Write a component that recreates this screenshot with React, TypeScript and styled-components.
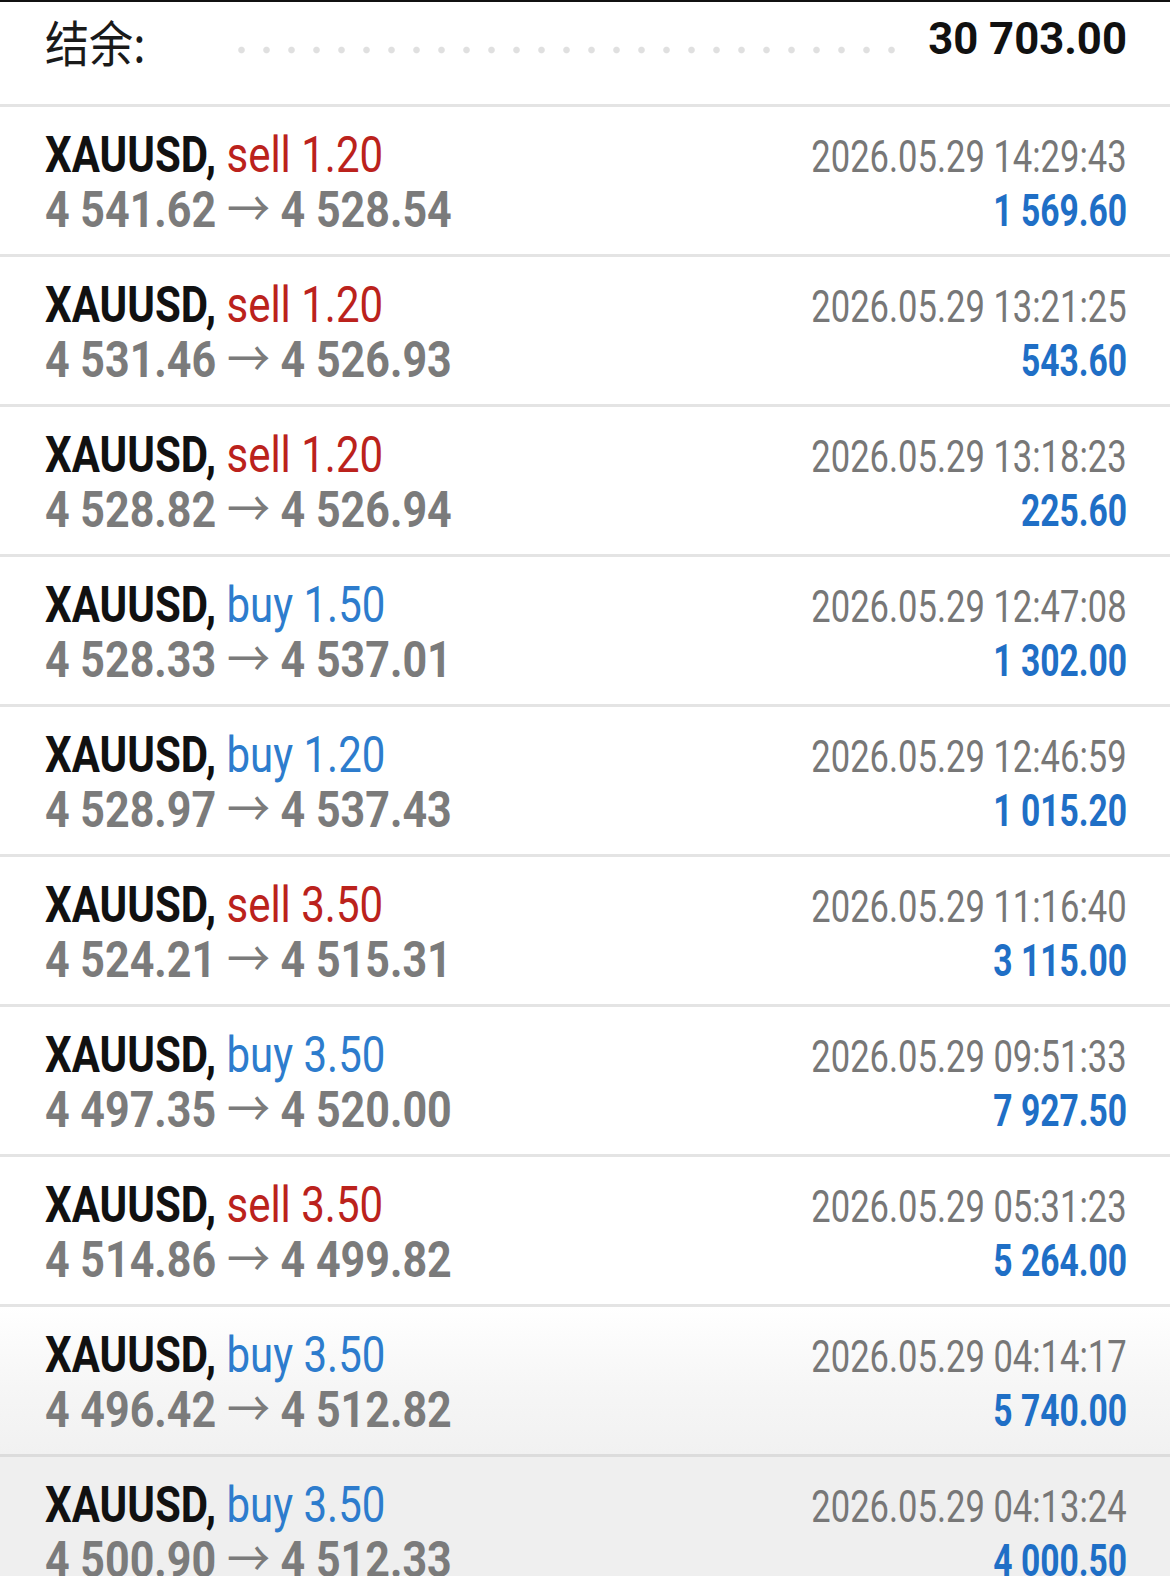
import React from "react";
import styled, { createGlobalStyle } from "styled-components";

interface Trade {
  side: "sell" | "buy";
  volume: string;
  open: string;
  close: string;
  time: string;
  profit: string;
}

const trades: Trade[] = [
  { side: "sell", volume: "1.20", open: "4 541.62", close: "4 528.54", time: "2026.05.29 14:29:43", profit: "1 569.60" },
  { side: "sell", volume: "1.20", open: "4 531.46", close: "4 526.93", time: "2026.05.29 13:21:25", profit: "543.60" },
  { side: "sell", volume: "1.20", open: "4 528.82", close: "4 526.94", time: "2026.05.29 13:18:23", profit: "225.60" },
  { side: "buy", volume: "1.50", open: "4 528.33", close: "4 537.01", time: "2026.05.29 12:47:08", profit: "1 302.00" },
  { side: "buy", volume: "1.20", open: "4 528.97", close: "4 537.43", time: "2026.05.29 12:46:59", profit: "1 015.20" },
  { side: "sell", volume: "3.50", open: "4 524.21", close: "4 515.31", time: "2026.05.29 11:16:40", profit: "3 115.00" },
  { side: "buy", volume: "3.50", open: "4 497.35", close: "4 520.00", time: "2026.05.29 09:51:33", profit: "7 927.50" },
  { side: "sell", volume: "3.50", open: "4 514.86", close: "4 499.82", time: "2026.05.29 05:31:23", profit: "5 264.00" },
  { side: "buy", volume: "3.50", open: "4 496.42", close: "4 512.82", time: "2026.05.29 04:14:17", profit: "5 740.00" },
  { side: "buy", volume: "3.50", open: "4 500.90", close: "4 512.33", time: "2026.05.29 04:13:24", profit: "4 000.50" },
];

const GlobalStyle = createGlobalStyle`
  html, body {
    margin: 0;
    padding: 0;
    background: #efefef;
    overflow: hidden;
  }
  body {
    font-family: Roboto, "Noto Sans CJK SC", sans-serif;
  }
`;

const Page = styled.div`
  width: 1170px;
  height: 1576px;
  overflow: hidden;
  background: #fff;
  border-top: 2px solid #111;
  box-sizing: border-box;
`;

const BalanceBar = styled.div`
  display: flex;
  align-items: flex-start;
  height: 105px;
  padding: 14px 43px 0 45px;
  box-sizing: border-box;
  border-bottom: 3px solid #e4e4e4;
  background: #fff;
`;

const BalanceLabel = styled.span`
  display: inline-block;
  width: 184px;
  font-family: "Noto Sans CJK SC", sans-serif;
  font-size: 49px;
  line-height: 50px;
  color: #1a1a1a;
  white-space: nowrap;
  transform: scaleX(0.9);
  transform-origin: left center;
`;

const Leader = styled.div`
  width: 675px;
  height: 10px;
  margin-top: 29px;
  background-image: radial-gradient(circle, #e0e0e0 2.8px, rgba(255, 255, 255, 0) 3.8px);
  background-size: 25px 10px;
  background-repeat: repeat-x;
`;

const BalanceValue = styled.span`
  display: inline-block;
  margin-left: auto;
  font-size: 45px;
  font-weight: 700;
  line-height: 46px;
  color: #111;
  white-space: nowrap;
  transform: scaleX(0.97);
  transform-origin: right center;
`;

type Tone = "plain" | "fade" | "gray";

const Row = styled.div<{ $tone: Tone }>`
  display: flex;
  justify-content: space-between;
  height: 150px;
  padding: 21px 43px 0 45px;
  box-sizing: border-box;
  border-bottom: 3px solid ${({ $tone }) => ($tone === "plain" ? "#e4e4e4" : "#dcdcdc")};
  background: ${({ $tone }) =>
    $tone === "fade"
      ? "linear-gradient(180deg, #ffffff 0%, #f6f6f6 55%, #f1f1f1 100%)"
      : $tone === "gray"
      ? "#efefef"
      : "#fff"};
`;

const LeftCol = styled.div`
  display: flex;
  flex-direction: column;
  align-items: flex-start;
`;

const RightCol = styled.div`
  display: flex;
  flex-direction: column;
  align-items: flex-end;
  padding-top: 2px;
`;

const Title = styled.div`
  display: inline-block;
  font-size: 50px;
  line-height: 55px;
  white-space: nowrap;
  transform: scaleX(0.84);
  transform-origin: left center;
`;

const Symbol = styled.span`
  font-weight: 700;
  color: #111;
`;

const Side = styled.span<{ $side: "sell" | "buy" }>`
  font-weight: 400;
  color: ${({ $side }) => ($side === "sell" ? "#bb221c" : "#2d7ccd")};
`;

const Prices = styled.div`
  display: inline-block;
  font-size: 50px;
  font-weight: 700;
  line-height: 55px;
  color: #7b7b7b;
  white-space: nowrap;
  transform: scaleX(0.86);
  transform-origin: left center;
`;

const Arrow = styled.span`
  font-weight: 400;
`;

const Time = styled.div`
  display: inline-block;
  font-size: 44px;
  line-height: 54px;
  color: #777;
  white-space: nowrap;
  transform: scaleX(0.785);
  transform-origin: right center;
`;

const Profit = styled.div`
  display: inline-block;
  font-size: 45px;
  font-weight: 700;
  line-height: 54px;
  color: #1f6fc6;
  white-space: nowrap;
  transform: scaleX(0.747);
  transform-origin: right center;
`;

function toneFor(index: number): Tone {
  if (index === 8) return "fade";
  if (index === 9) return "gray";
  return "plain";
}

export default function App() {
  return (
    <>
      <GlobalStyle />
      <Page>
        <BalanceBar>
          <BalanceLabel>结余:</BalanceLabel>
          <Leader />
          <BalanceValue>30 703.00</BalanceValue>
        </BalanceBar>
        {trades.map((t, i) => (
          <Row key={i} $tone={toneFor(i)}>
            <LeftCol>
              <Title>
                <Symbol>XAUUSD,</Symbol> <Side $side={t.side}>{t.side} {t.volume}</Side>
              </Title>
              <Prices>
                {t.open} <Arrow>→</Arrow> {t.close}
              </Prices>
            </LeftCol>
            <RightCol>
              <Time>{t.time}</Time>
              <Profit>{t.profit}</Profit>
            </RightCol>
          </Row>
        ))}
      </Page>
    </>
  );
}
